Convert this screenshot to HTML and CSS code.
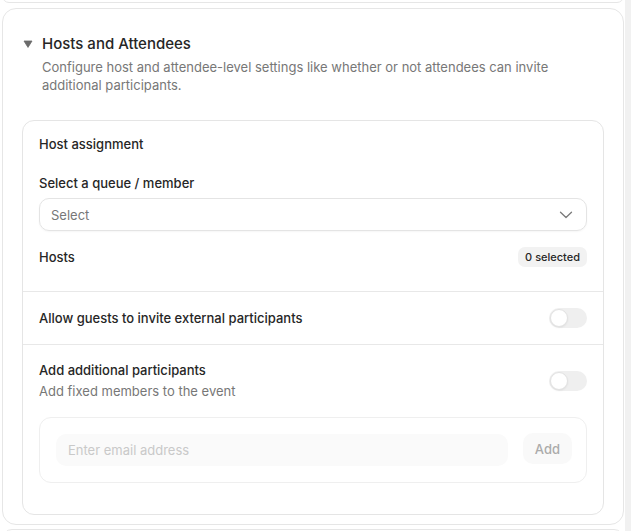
FILE: index.html
```html
<!DOCTYPE html>
<html lang="en">
<head>
  <meta charset="UTF-8">
  <meta name="viewport" content="width=device-width, initial-scale=1.0">
  <title>Event settings</title>
  <link rel="stylesheet" href="styles.css">
</head>
<body>

  <div class="page">
    <main class="scroller">
      <div class="card card-tail"></div>

      <section class="card">
        <header class="section-head">
          <svg class="caret" width="10" height="8" viewBox="0 0 10 8">
            <path d="M1 1 H9 L5 7.4 Z" fill="#6b6b6b" stroke="#6b6b6b" stroke-width="0.8" stroke-linejoin="round"/>
          </svg>
          <div>
            <h2>Hosts and Attendees</h2>
            <p class="muted">Configure host and attendee-level settings like whether or not attendees can invite additional participants.</p>
          </div>
        </header>

        <div class="panel">
          <div class="panel-row host-block">
            <div class="label">Host assignment</div>
            <label class="label field-label">Select a queue / member</label>
            <div class="select">
              <span>Select</span>
              <svg width="14" height="8" viewBox="0 0 14 8">
                <path d="M1.5 1.2 L7 6.5 L12.5 1.2" fill="none" stroke="#7a7a7a" stroke-width="1.3" stroke-linecap="round" stroke-linejoin="round"/>
              </svg>
            </div>
            <div class="hosts-row">
              <span class="label">Hosts</span>
              <span class="badge">0 selected</span>
            </div>
          </div>

          <div class="panel-row toggle-row">
            <span class="label">Allow guests to invite external participants</span>
            <span class="toggle"><span class="knob"></span></span>
          </div>

          <div class="panel-row extra-block">
            <div class="toggle-row">
              <div>
                <div class="label">Add additional participants</div>
                <div class="muted sub">Add fixed members to the event</div>
              </div>
              <span class="toggle"><span class="knob"></span></span>
            </div>
            <div class="invite-box">
              <input class="email" type="text" placeholder="Enter email address" disabled>
              <button class="add-btn" disabled>Add</button>
            </div>
          </div>
        </div>
      </section>

      <div class="card card-next"></div>
    </main>
    <div class="track"></div>
  </div>

</body>
</html>
```

FILE: styles.css
```css
* {
  box-sizing: border-box;
}

body {
  margin: 0;
  font-family: Inter, "Noto Sans", sans-serif;
  color: #262626;
  background-color: #ffffff;
}

.page {
  display: flex;
  height: 531px;
  overflow: hidden;
}

.scroller {
  flex: 1;
  padding: 0 1px 0 2px;
}

.track {
  width: 6px;
  background-color: #f1f1f1;
}

.card {
  background-color: #fff;
  border: 1px solid #e6e6e6;
  border-radius: 14px;
  padding: 25px 19px 9px 19px;
  margin-bottom: 4px;
}

.card-tail {
  height: 14px;
  margin-top: -11px;
  padding: 0;
  margin-bottom: 5px;
}

.card-next {
  height: 20px;
  padding: 0;
}

.section-head {
  display: flex;
  align-items: flex-start;
}

.caret {
  margin: 6px 9px 0 1px;
  flex-shrink: 0;
}

h2 {
  margin: 0;
  font-size: 15px;
  line-height: 20px;
  font-weight: 500;
  color: #262626;
}

.muted {
  color: #777;
  font-size: 13px;
  line-height: 18px;
}

.section-head p {
  margin: 4px 0 0 0;
}

.panel {
  margin-top: 26px;
  border: 1px solid #e5e5e5;
  border-radius: 12px;
}

.panel-row {
  padding: 16px;
}

.panel-row + .panel-row {
  border-top: 1px solid #e8e8e8;
}

.label {
  font-size: 13px;
  line-height: 18px;
  font-weight: 500;
  color: #262626;
}

.host-block {
  padding-top: 14px;
  padding-bottom: 24px;
}

.field-label {
  display: block;
  margin-top: 21px;
}

.select {
  margin-top: 6px;
  height: 33px;
  border: 1px solid #e4e4e4;
  border-radius: 10px;
  display: flex;
  align-items: center;
  justify-content: space-between;
  padding: 0 13px 0 11px;
  font-size: 13px;
  color: #777;
  box-shadow: 0 1px 2px rgba(0, 0, 0, 0.04);
}

.hosts-row {
  margin-top: 16px;
  display: flex;
  justify-content: space-between;
  align-items: center;
}

.badge {
  background-color: #f2f2f2;
  border-radius: 7px;
  font-size: 11px;
  font-weight: 500;
  line-height: 20px;
  padding: 0 7px;
  color: #262626;
}

.toggle-row {
  display: flex;
  justify-content: space-between;
  align-items: center;
}

.toggle {
  width: 38px;
  height: 20px;
  border-radius: 10px;
  background-color: #efefef;
  display: flex;
  align-items: center;
  padding: 1px;
}

.knob {
  width: 18px;
  height: 18px;
  border-radius: 50%;
  background-color: #fff;
  border: 1px solid #e2e2e2;
  box-shadow: 0 1px 2px rgba(0, 0, 0, 0.06);
}

.sub {
  margin-top: 3px;
}

.extra-block {
  padding-bottom: 31px;
}

.invite-box {
  margin-top: 17px;
  border: 1px solid #efefef;
  border-radius: 12px;
  padding: 16px 14px 16px 16px;
  display: flex;
  align-items: center;
  gap: 15px;
}

.email {
  flex: 1;
  height: 32px;
  border: none;
  border-radius: 10px;
  background-color: #fafafa;
  padding: 0 12px;
  font-family: inherit;
  font-size: 13px;
}

.email::placeholder {
  color: #c9c9c9;
}

.add-btn {
  height: 31px;
  margin-top: -3px;
  padding: 0 12px;
  border: none;
  border-radius: 10px;
  background-color: #f9f9f9;
  font-family: inherit;
  font-size: 13px;
  font-weight: 500;
  color: #ababab;
}
```
